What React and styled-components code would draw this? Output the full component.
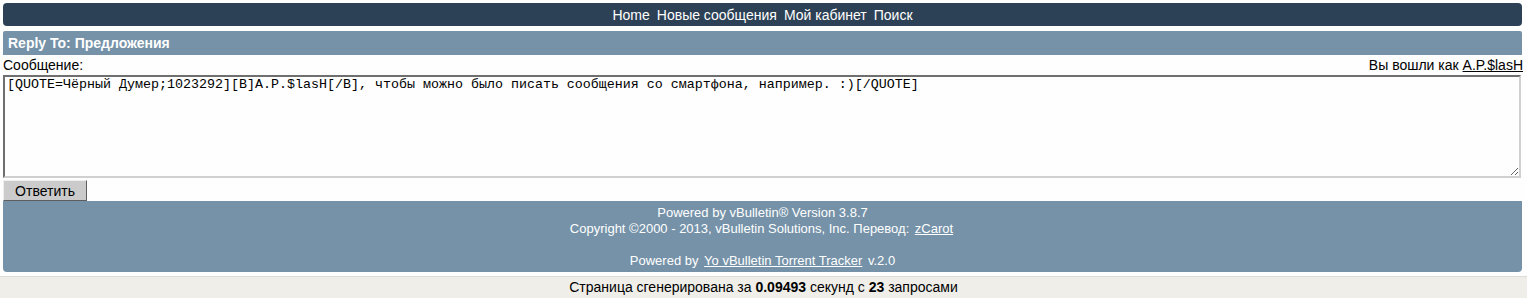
import React from "react";
import styled, { createGlobalStyle } from "styled-components";

const GlobalStyle = createGlobalStyle`
    html, body {
        margin: 0;
        padding: 0;
        background: #fdfefd;
        font-family: "Liberation Sans", Arial, sans-serif;
    }
`;

const navLinks = ["Home", "Новые сообщения", "Мой кабинет", "Поиск"];

const quote =
    "[QUOTE=Чёрный Думер;1023292][B]A.P.$lasH[/B], чтобы можно было писать сообщения со смартфона, например. :)[/QUOTE]";

export default function App() {
    return (
        <>
            <GlobalStyle />
            <Page>
                <NavBar>
                    {navLinks.map((l) => (
                        <NavLink key={l}>{l}</NavLink>
                    ))}
                </NavBar>

                <TitleBar>Reply To: Предложения</TitleBar>

                <LabelRow>
                    <span>Сообщение:</span>
                    <span>
                        Вы вошли как <UserLink>A.P.$lasH</UserLink>
                    </span>
                </LabelRow>

                <MessageBox defaultValue={quote} />

                <SubmitButton>Ответить</SubmitButton>

                <Footer>
                    <div>Powered by vBulletin® Version 3.8.7</div>
                    <div>
                        Copyright ©2000 - 2013, vBulletin Solutions, Inc.
                        Перевод: <FooterLink>zCarot</FooterLink>
                    </div>
                    <FooterGap />
                    <div>
                        Powered by <FooterLink>Yo vBulletin Torrent Tracker</FooterLink>{" "}
                        v.2.0
                    </div>
                </Footer>
            </Page>

            <StatsBar>
                Страница сгенерирована за <b>0.09493</b> секунд с <b>23</b>{" "}
                запросами
            </StatsBar>
        </>
    );
}

const Page = styled.div`
    padding: 3px 5px 0 3px;
    display: flex;
    flex-direction: column;
`;

const NavBar = styled.div`
    height: 23px;
    background: #2d4156;
    border-radius: 4px;
    display: flex;
    justify-content: center;
    align-items: center;
    gap: 7px;
    font-size: 14px;
`;

const NavLink = styled.span`
    color: #ffffff;
`;

const TitleBar = styled.div`
    margin-top: 5px;
    height: 24px;
    background: #7592a8;
    border-radius: 2px 2px 0 0;
    color: #ffffff;
    font-weight: bold;
    font-size: 14px;
    line-height: 25px;
    padding-left: 5px;
`;

const LabelRow = styled.div`
    display: flex;
    justify-content: space-between;
    font-size: 14px;
    color: #000;
    height: 18px;
    line-height: 18px;
    margin-top: 1px;
    margin-right: -1px;
`;

const UserLink = styled.span`
    text-decoration: underline;
`;

const MessageBox = styled.textarea`
    box-sizing: border-box;
    width: calc(100% - 1px);
    height: 103px;
    margin: 1px 0 0;
    padding: 0 2px;
    font-family: "Liberation Mono", "Courier New", monospace;
    font-size: 13.33px;
    color: #000;
    background: #fdfefd;
    border-top: 2px solid #6f6f6f;
    border-left: 2px solid #6f6f6f;
    border-right: 2px solid #d0d0d0;
    border-bottom: 2px solid #d0d0d0;
    outline: none;
`;

const SubmitButton = styled.button`
    margin-top: 2px;
    align-self: flex-start;
    width: 84px;
    height: 21px;
    padding: 0;
    background: #cbcbcb;
    border: 1px solid;
    border-color: #eeeeee #5e5e5e #5e5e5e #eeeeee;
    font-family: "Liberation Sans", Arial, sans-serif;
    font-size: 14px;
    color: #000;
`;

const Footer = styled.div`
    height: 71px;
    background: #7592a8;
    border-radius: 0 0 4px 4px;
    color: #ffffff;
    font-size: 13px;
    line-height: 16px;
    text-align: center;
    padding-top: 4px;
    box-sizing: border-box;
`;

const FooterGap = styled.div`
    height: 16px;
`;

const FooterLink = styled.span`
    text-decoration: underline;
    margin: 0 2px;
`;

const StatsBar = styled.div`
    margin-top: 4px;
    border-top: 1px solid #dcdcd8;
    background: #efeee9;
    height: 21px;
    line-height: 21px;
    text-align: center;
    font-size: 14px;
    color: #000;
`;
